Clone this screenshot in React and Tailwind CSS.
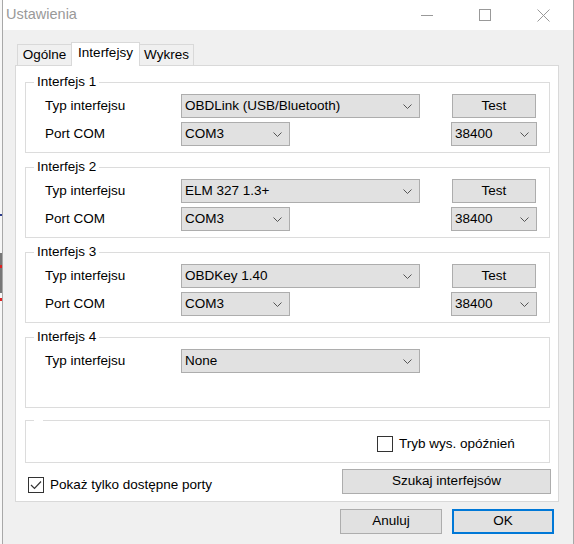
import React from 'react';

const Chevron = () => (
  <svg width="9" height="5" viewBox="0 0 9 5" className="shrink-0">
    <polyline points="0.5,0.5 4.5,4.5 8.5,0.5" fill="none" stroke="#555" strokeWidth="1" />
  </svg>
);

const Combo = ({ value, className }) => (
  <div className={`${className} h-[24px] bg-[#e1e1e1] border border-[#adadad] flex items-center pl-[3px] pr-[7px]`}>
    <span className="flex-1 truncate leading-[16px]">{value}</span>
    <Chevron />
  </div>
);

const Button = ({ children, className }) => (
  <div className={`${className} h-[25px] bg-[#e1e1e1] border border-[#adadad] flex items-center justify-center`}>
    {children}
  </div>
);

const Checkbox = ({ checked, label }) => (
  <div className="flex items-center gap-[6px]">
    <div className="w-[16px] h-[16px] border border-[#333] bg-white flex items-center justify-center">
      {checked && (
        <svg width="12" height="10" viewBox="0 0 12 10">
          <polyline points="1,5 4.5,8.5 11,1.5" fill="none" stroke="#333" strokeWidth="1.2" />
        </svg>
      )}
    </div>
    <span className="leading-[16px]">{label}</span>
  </div>
);

const Group = ({ title, children, className }) => (
  <div className={`${className} relative w-[525px] border border-[#dcdcdc]`}>
    <span className="absolute left-[8px] -top-[9px] px-[3px] bg-white leading-[16px]">{title}</span>
    {children}
  </div>
);

const interfaces = [
  { id: 1, type: 'OBDLink (USB/Bluetooth)' },
  { id: 2, type: 'ELM 327 1.3+' },
  { id: 3, type: 'OBDKey 1.40' },
];

const App = () => {
  return (
    <div className="w-[574px] h-[544px] flex bg-[#f7f7f7] font-['Liberation_Sans',Arial,sans-serif] text-[13.5px] text-black overflow-hidden">
      {/* scrap of the window behind */}
      <div className="w-[2px] flex flex-col">
        <div className="h-[214px]" />
        <div className="h-[2px] bg-[#2b3a8c]" />
        <div className="h-[37px]" />
        <div className="h-[40px] bg-[#777] flex flex-col">
          <div className="h-[12px]" />
          <div className="h-[3px] bg-[#d22]" />
        </div>
        <div className="h-[5px]" />
        <div className="h-[3px] bg-[#d22]" />
      </div>

      {/* window */}
      <div className="w-[572px] h-full border-x border-[#a8a8a8] flex flex-col">
        {/* title bar */}
        <div className="h-[30px] bg-white flex items-center">
          <span className="pl-[3px] text-[14.5px] text-[#999]">Ustawienia</span>
          <div className="ml-auto flex mr-[1px]">
            <div className="w-[58px] h-[30px] flex items-center justify-center">
              <div className="w-[12px] h-px bg-[#999]" />
            </div>
            <div className="w-[58px] h-[30px] flex items-center justify-center">
              <div className="w-[12px] h-[12px] border border-[#999]" />
            </div>
            <div className="w-[58px] h-[30px] flex items-center justify-center">
              <svg width="13" height="13" viewBox="0 0 13 13">
                <path d="M0.5 0.5 L12.5 12.5 M12.5 0.5 L0.5 12.5" stroke="#999" strokeWidth="1" />
              </svg>
            </div>
          </div>
        </div>

        {/* body */}
        <div className="flex-1 bg-[#f0f0f0] flex flex-col">
          {/* tabs */}
          <div className="mt-[12px] pl-[14px] h-[23px] flex items-end">
            <div className="w-[54px] h-[21px] border border-b-0 border-r-0 border-[#d9d9d9] flex items-center justify-center">Ogólne</div>
            <div className="w-[69px] h-[24px] -mb-px relative z-10 bg-white border border-b-0 border-[#d9d9d9] flex items-center justify-center pb-[3px]">Interfejsy</div>
            <div className="w-[54px] h-[21px] border border-b-0 border-l-0 border-[#d9d9d9] flex items-center justify-center">Wykres</div>
          </div>

          {/* tab panel */}
          <div className="ml-[12px] w-[544px] h-[437px] bg-white border border-[#d9d9d9] flex flex-col pl-[9px]">
            {interfaces.map((it, i) => (
              <Group key={it.id} title={`Interfejs ${it.id}`} className={i === 0 ? 'mt-[16px] h-[71px]' : 'mt-[14px] h-[71px]'}>
                <div className="pt-[11px] pl-[19px]">
                  <div className="h-[24px] flex items-center">
                    <span className="w-[136px]">Typ interfejsu</span>
                    <Combo value={it.type} className="w-[239px]" />
                    <Button className="ml-[32px] w-[84px] !h-[24px]">Test</Button>
                  </div>
                  <div className="mt-[4px] h-[24px] flex items-center">
                    <span className="w-[136px]">Port COM</span>
                    <Combo value="COM3" className="w-[109px]" />
                    <Combo value="38400" className="ml-[161px] w-[86px]" />
                  </div>
                </div>
              </Group>
            ))}

            <Group title="Interfejs 4" className="mt-[14px] h-[71px]">
              <div className="pt-[11px] pl-[19px]">
                <div className="h-[24px] flex items-center">
                  <span className="w-[136px]">Typ interfejsu</span>
                  <Combo value="None" className="w-[239px]" />
                </div>
              </div>
            </Group>

            <Group title={<span className="inline-block w-[3px]" />} className="mt-[12px] h-[43px]">
              <div className="pt-[15px] pl-[351px]">
                <Checkbox label="Tryb wys. opóźnień" />
              </div>
            </Group>

            <div className="mt-[6px] flex items-start">
              <div className="mt-[8px] ml-[3px]">
                <Checkbox checked label="Pokaż tylko dostępne porty" />
              </div>
              <Button className="ml-auto mr-[7px] w-[209px]">Szukaj interfejsów</Button>
            </div>
          </div>

          {/* dialog buttons */}
          <div className="mt-[7px] pl-[337px] flex gap-[10px]">
            <Button className="w-[102px]">Anuluj</Button>
            <div className="w-[102px] h-[25px] bg-[#e1e1e1] border-2 border-[#0078d7] flex items-center justify-center">OK</div>
          </div>
        </div>
      </div>
    </div>
  );
};

export default App;
